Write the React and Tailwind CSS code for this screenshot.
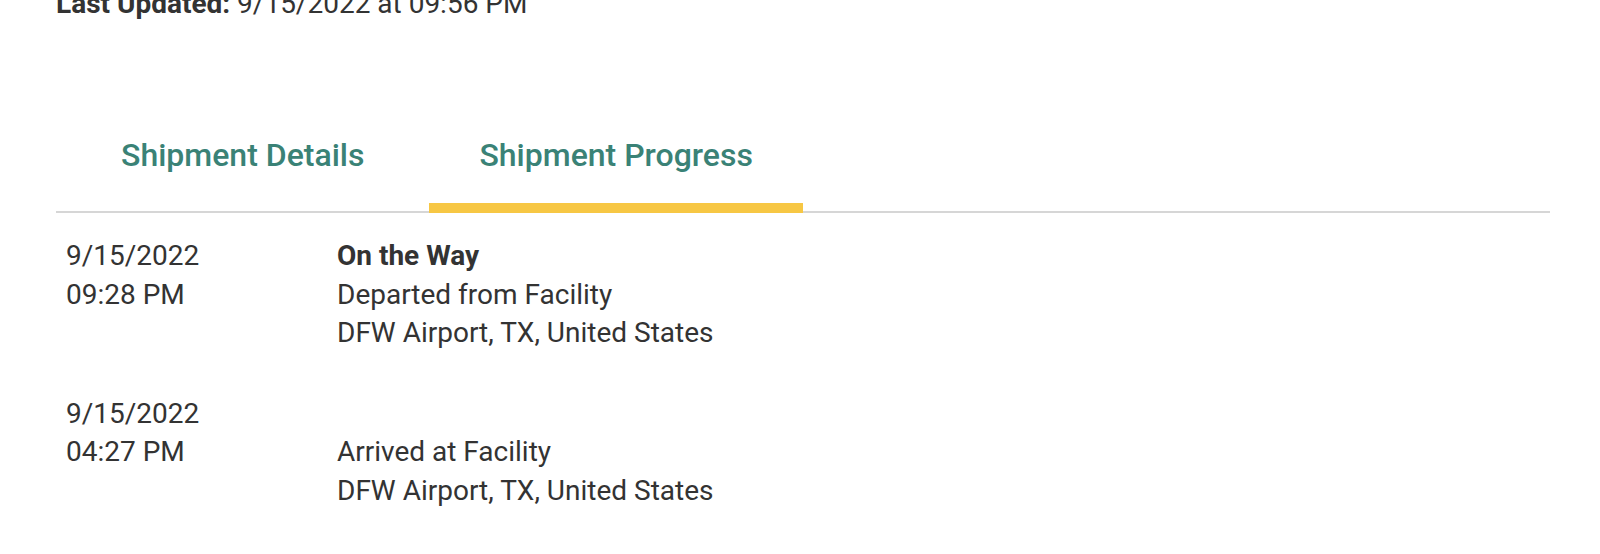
import React, { useState } from 'react';

const events = [
  { date: '9/15/2022', time: '09:28 PM', status: 'On the Way', detail: 'Departed from Facility', place: 'DFW Airport, TX, United States' },
  { date: '9/15/2022', time: '04:27 PM', status: '', detail: 'Arrived at Facility', place: 'DFW Airport, TX, United States' },
];

function App() {
  const [tab, setTab] = useState('progress');

  return (
    <div className="h-[554px] overflow-hidden bg-white text-[#333] font-['Roboto',sans-serif]">
      <div className="ml-[56px] mr-[50px]">
        <p className="-mt-[15px] text-[28px] leading-[38px]">
          <span className="font-bold">Last Updated:</span> 9/15/2022 at 09:56 PM
        </p>

        <div className="mt-[108px] flex gap-[15px] pl-[15px] border-b-2 border-[#d6d6d6]">
          <button
            onClick={() => setTab('details')}
            className={`px-[50px] pb-[24px] text-[32px] leading-[48px] font-medium text-[#3a8276] border-b-[10px] -mb-[2px] ${tab === 'details' ? 'border-[#f7c744]' : 'border-transparent'}`}
          >
            Shipment Details
          </button>
          <button
            onClick={() => setTab('progress')}
            className={`px-[50px] pb-[24px] text-[32px] leading-[48px] font-medium text-[#3a8276] border-b-[10px] -mb-[2px] ${tab === 'progress' ? 'border-[#f7c744]' : 'border-transparent'}`}
          >
            Shipment Progress
          </button>
        </div>

        <div className="text-[28px] leading-[38.5px]">
          {events.map((ev, i) => (
            <div key={i} className="flex pt-[24px] pb-[18px] pl-[10px]">
              <div className="w-[271px] shrink-0">
                <div>{ev.date}</div>
                <div>{ev.time}</div>
              </div>
              <div>
                <div className="font-bold min-h-[38.5px]">{ev.status}</div>
                <div>{ev.detail}</div>
                <div>{ev.place}</div>
              </div>
            </div>
          ))}
        </div>
      </div>
    </div>
  );
}

export default App;
